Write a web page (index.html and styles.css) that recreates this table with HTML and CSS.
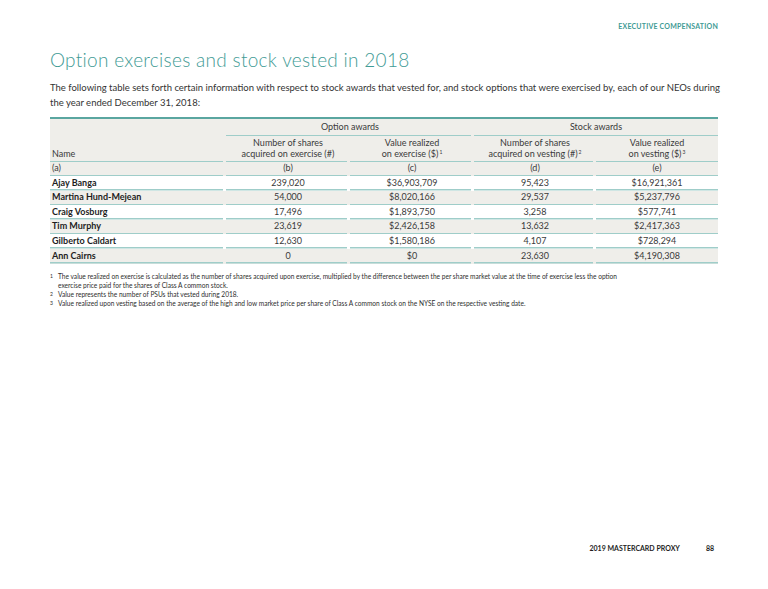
FILE: index.html
```html
<!DOCTYPE html>
<html lang="en">
<head>
<meta charset="utf-8">
<title>Option exercises and stock vested in 2018</title>
<link rel="stylesheet" href="styles.css">
</head>
<body>
<div class="page">
  <header class="running-head">EXECUTIVE COMPENSATION</header>
  <h1 class="title">Option exercises and stock vested in 2018</h1>
  <p class="intro">The following table sets forth certain information with respect to stock awards that vested for, and stock options that were exercised by, each of our NEOs during<br>the year ended December 31, 2018:</p>

  <div class="grid">
    <div class="c hd top first"></div>
    <div class="c hd top group span2"><span>Option awards</span></div>
    <div class="c hd top group span2 last"><span>Stock awards</span></div>

    <div class="c hd col first name"><span>Name</span></div>
    <div class="c hd col"><span>Number of shares<br>acquired on exercise (#)</span></div>
    <div class="c hd col"><span>Value realized<br>on exercise ($)<sup>1</sup></span></div>
    <div class="c hd col"><span>Number of shares<br>acquired on vesting (#)<sup>2</sup></span></div>
    <div class="c hd col last"><span>Value realized<br>on vesting ($)<sup>3</sup></span></div>

    <div class="c hd letter first name"><span>(a)</span></div>
    <div class="c hd letter"><span>(b)</span></div>
    <div class="c hd letter"><span>(c)</span></div>
    <div class="c hd letter"><span>(d)</span></div>
    <div class="c hd letter last"><span>(e)</span></div>

    <div class="c first name b"><span>Ajay Banga</span></div>
    <div class="c"><span>239,020</span></div>
    <div class="c"><span>$36,903,709</span></div>
    <div class="c"><span>95,423</span></div>
    <div class="c last"><span>$16,921,361</span></div>

    <div class="c alt first name b"><span>Martina Hund-Mejean</span></div>
    <div class="c alt"><span>54,000</span></div>
    <div class="c alt"><span>$8,020,166</span></div>
    <div class="c alt"><span>29,537</span></div>
    <div class="c alt last"><span>$5,237,796</span></div>

    <div class="c first name b"><span>Craig Vosburg</span></div>
    <div class="c"><span>17,496</span></div>
    <div class="c"><span>$1,893,750</span></div>
    <div class="c"><span>3,258</span></div>
    <div class="c last"><span>$577,741</span></div>

    <div class="c alt first name b"><span>Tim Murphy</span></div>
    <div class="c alt"><span>23,619</span></div>
    <div class="c alt"><span>$2,426,158</span></div>
    <div class="c alt"><span>13,632</span></div>
    <div class="c alt last"><span>$2,417,363</span></div>

    <div class="c first name b"><span>Gilberto Caldart</span></div>
    <div class="c"><span>12,630</span></div>
    <div class="c"><span>$1,580,186</span></div>
    <div class="c"><span>4,107</span></div>
    <div class="c last"><span>$728,294</span></div>

    <div class="c alt first name b"><span>Ann Cairns</span></div>
    <div class="c alt"><span>0</span></div>
    <div class="c alt"><span>$0</span></div>
    <div class="c alt"><span>23,630</span></div>
    <div class="c alt last"><span>$4,190,308</span></div>
  </div>

  <ol class="notes">
    <li><span class="num">1</span><span>The value realized on exercise is calculated as the number of shares acquired upon exercise, multiplied by the difference between the per share market value at the time of exercise less the option<br>exercise price paid for the shares of Class A common stock.</span></li>
    <li><span class="num">2</span><span>Value represents the number of PSUs that vested during 2018.</span></li>
    <li><span class="num">3</span><span>Value realized upon vesting based on the average of the high and low market price per share of Class A common stock on the NYSE on the respective vesting date.</span></li>
  </ol>

  <footer class="foot">
    <span class="foot-title">2019 MASTERCARD PROXY</span>
    <span class="foot-page">88</span>
  </footer>
</div>
</body>
</html>
```
FILE: styles.css
```css
* { box-sizing: border-box; }
html, body { margin: 0; padding: 0; background: #fff; }
body {
  font-family: Lato, "Noto Sans", "Liberation Sans", sans-serif;
  color: #3a3a3a;
}
.page {
  width: 768px;
  height: 589px;
  padding: 0 50px;
  display: flex;
  flex-direction: column;
}
.running-head {
  margin-top: 22px;
  align-self: flex-end;
  font-size: 7px;
  font-weight: 700;
  letter-spacing: 0.2px;
  color: #3f9b95;
  line-height: 8px;
}
.title {
  margin: 18px 0 0;
  font-size: 19px;
  font-weight: 300;
  line-height: 24px;
  color: #3f9b95;
  letter-spacing: 0.3px;
}
.intro {
  margin: 8px 0 0;
  font-size: 9.5px;
  line-height: 15px;
  color: #333;
  white-space: nowrap;
}
.grid {
  margin-top: 7px;
  display: grid;
  grid-template-columns: 176px 124px 124px 122px 122px;
  border-top: 2px solid #5aa6a0;
  font-size: 9px;
  color: #3a3a3a;
}
.c {
  display: flex;
  align-items: center;
  justify-content: center;
  text-align: center;
  height: 14.6px;
  line-height: 10.5px;
  background-color: #fff;
  background-image: linear-gradient(#9fcdc9, #9fcdc9);
  background-repeat: no-repeat;
  background-position: left bottom;
  background-size: calc(100% - 3px) 1.5px;
  padding-bottom: 1px;
}
.c.last { background-size: 100% 1.5px; }
.c.alt, .c.hd { background-color: #efeeea; }
.c.top { height: 17px; }
.c.top.first { background-image: none; }
.c.span2 { grid-column: span 2; }
.c.col { height: 26px; align-items: flex-end; padding-bottom: 3px; }
.c.letter { height: 14px; }
.c.name { justify-content: flex-start; text-align: left; padding-left: 2px; }
.c.b { font-weight: 700; color: #1e1e1e; }
sup { font-size: 5px; vertical-align: 3px; line-height: 0; margin-left: 1px; }

.notes {
  list-style: none;
  margin: 8px 0 0;
  padding: 0;
  font-size: 6.6px;
  line-height: 9.3px;
  color: #2e2e2e;
}
.notes li { display: flex; }
.notes .num { width: 8px; flex: none; font-size: 5px; line-height: 8px; }

.foot {
  margin-top: auto;
  margin-bottom: 37px;
  align-self: flex-end;
  display: flex;
  gap: 26px;
  font-size: 7px;
  font-weight: 700;
  color: #1e1e1e;
  line-height: 8px;
  margin-right: 4px;
}
```
